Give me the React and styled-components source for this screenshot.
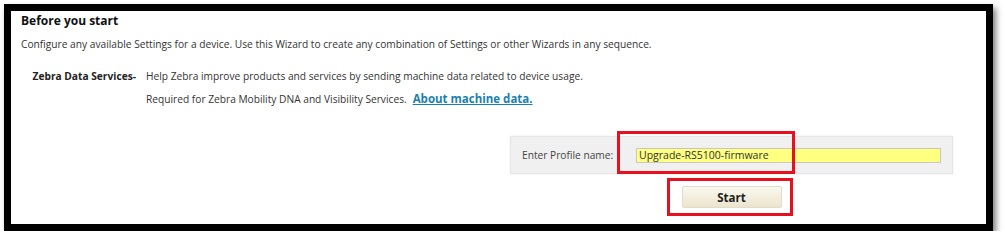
import React from "react";
import styled, { createGlobalStyle } from "styled-components";

const Global = createGlobalStyle`
  html, body { margin: 0; padding: 0; background: #ffffff; }
  body { font-family: "Open Sans", "Noto Sans", sans-serif; color: #333; }
`;

const Frame = styled.div`
  position: relative;
  box-sizing: border-box;
  margin: 4px 0 0 4px;
  width: 989px;
  height: 227px;
  border: 7px solid #000;
  background: #fff;
  box-shadow: 3px 4px 6px rgba(0, 0, 0, 0.5);
  padding: 1px 10px 0 10px;
`;

const Heading = styled.div`
  font-size: 12px;
  font-weight: 700;
  color: #111;
  line-height: 17px;
`;

const Description = styled.div`
  margin-top: 7px;
  font-size: 10.2px;
  line-height: 16px;
  color: #333;
`;

const ServiceGrid = styled.div`
  margin-top: 16px;
  display: grid;
  grid-template-columns: 115px auto;
  column-gap: 10px;
  row-gap: 7px;
  align-items: center;
  font-size: 10.2px;
  line-height: 16px;
`;

const ServiceLabel = styled.div`
  font-weight: 700;
  color: #222;
  text-align: right;
`;

const ServiceText = styled.div`
  color: #333;
`;

const Link = styled.a`
  margin-left: 6px;
  font-size: 11.5px;
  font-weight: 700;
  color: #1a7fb2;
  text-decoration: underline;
`;

const ProfileArea = styled.div`
  margin-top: 29px;
  width: 443px;
  margin-left: 489px;
  display: flex;
  flex-direction: column;
  align-items: center;
`;

const ProfilePanel = styled.div`
  box-sizing: border-box;
  width: 100%;
  height: 38px;
  background: #f0f0f0;
  border: 1px solid #e6e6e6;
  box-shadow: 0 0 2px rgba(0, 0, 0, 0.08);
  display: flex;
  align-items: center;
  padding: 0 11px;
`;

const ProfileLabel = styled.label`
  width: 114px;
  white-space: nowrap;
  font-size: 10.2px;
  color: #444;
`;

const ProfileInput = styled.input`
  box-sizing: border-box;
  flex: 1;
  height: 15px;
  background: #ffff80;
  border: 1px solid #c8c8c0;
  padding: 0 2px;
  font-family: inherit;
  font-size: 10.5px;
  color: #333;
  outline: none;
`;

const StartButton = styled.button`
  margin-top: 12px;
  width: 100px;
  height: 22px;
  border: 1px solid #e2dccb;
  border-radius: 2px;
  background: linear-gradient(#faf8f0, #ece4cc);
  font-family: inherit;
  font-size: 11.5px;
  font-weight: 700;
  color: #222;
`;

const Annotation = styled.div`
  position: absolute;
  box-sizing: border-box;
  border: 3px solid #e8101e;
  pointer-events: none;
`;

export default function App() {
  return (
    <>
      <Global />
      <Frame>
        <Heading>Before you start</Heading>
        <Description>
          Configure any available Settings for a device. Use this Wizard to create any combination of Settings or other
          Wizards in any sequence.
        </Description>
        <ServiceGrid>
          <ServiceLabel>Zebra Data Services-</ServiceLabel>
          <ServiceText>Help Zebra improve products and services by sending machine data related to device usage.</ServiceText>
          <span />
          <ServiceText>
            Required for Zebra Mobility DNA and Visibility Services.
            <Link href="#">About machine data.</Link>
          </ServiceText>
        </ServiceGrid>
        <ProfileArea>
          <ProfilePanel>
            <ProfileLabel>Enter Profile name:</ProfileLabel>
            <ProfileInput defaultValue="Upgrade-RS5100-firmware" />
          </ProfilePanel>
          <StartButton>Start</StartButton>
        </ProfileArea>
        <Annotation style={{ left: 606, top: 120, width: 178, height: 43 }} />
        <Annotation style={{ left: 656, top: 167, width: 126, height: 38 }} />
      </Frame>
    </>
  );
}
